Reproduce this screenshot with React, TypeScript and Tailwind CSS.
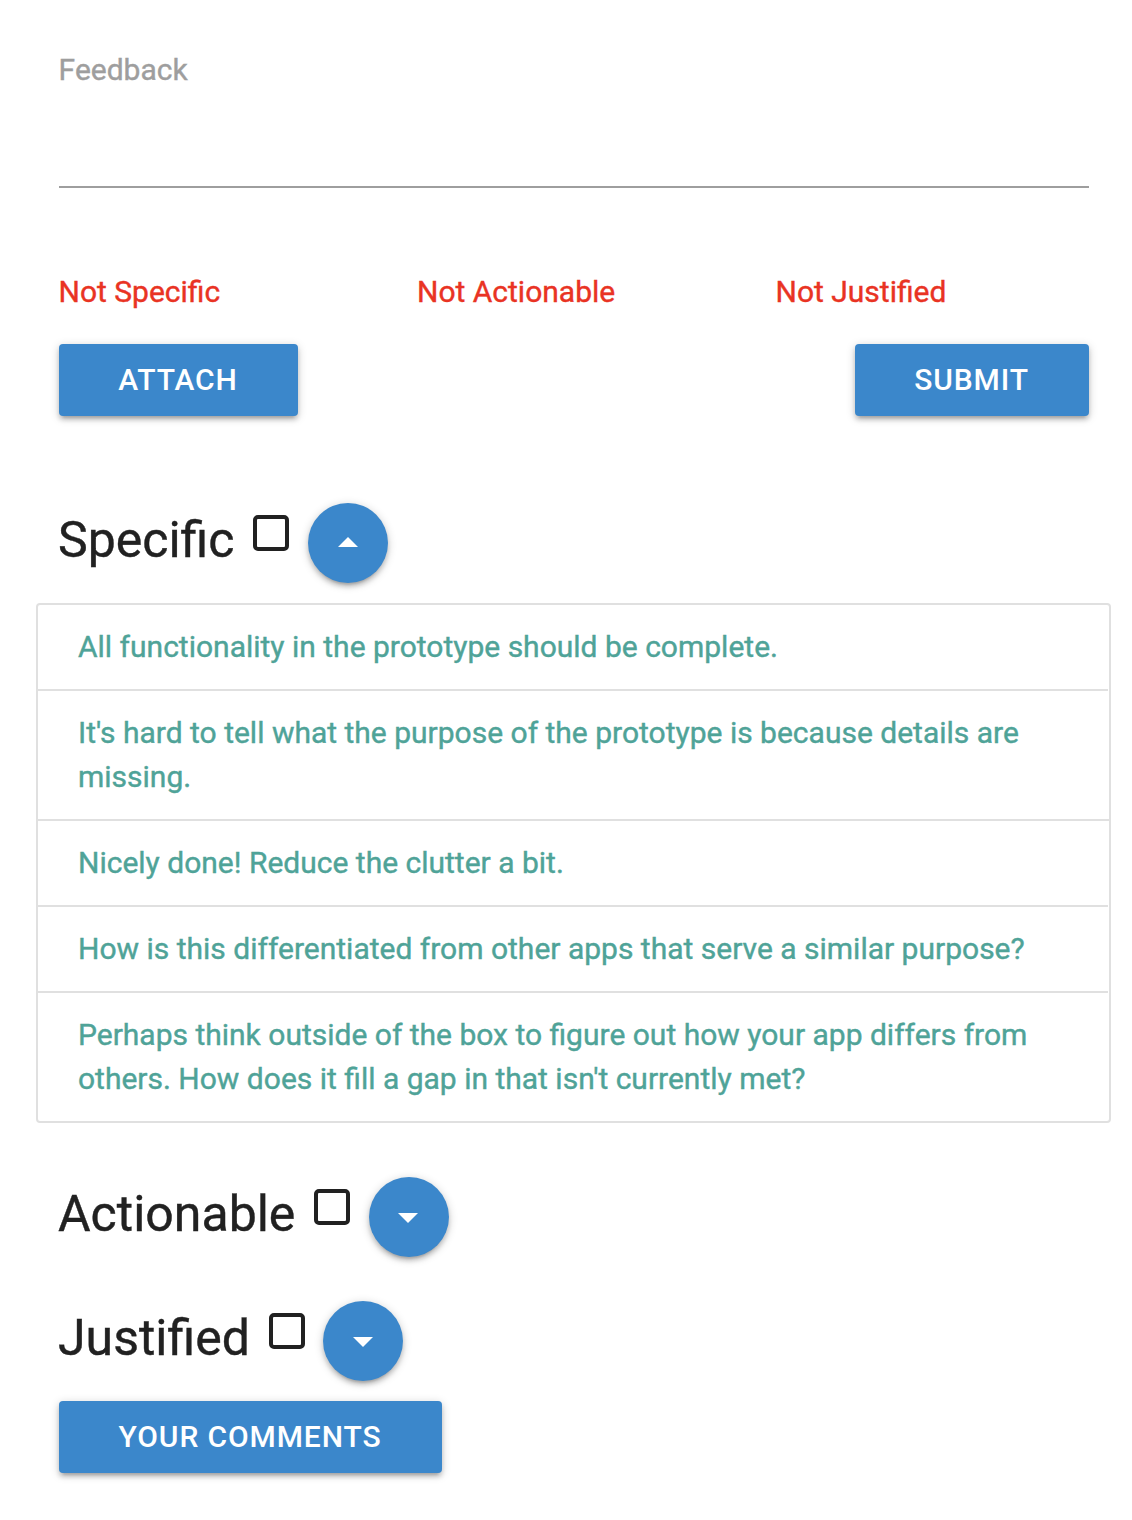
const comments = [
  "All functionality in the prototype should be complete.",
  "It's hard to tell what the purpose of the prototype is because details are missing.",
  "Nicely done! Reduce the clutter a bit.",
  "How is this differentiated from other apps that serve a similar purpose?",
  "Perhaps think outside of the box to figure out how your app differs from others. How does it fill a gap in that isn't currently met?",
];

const raised =
  "bg-[#3b87cb] text-white shadow-[0_4px_4px_rgba(0,0,0,0.14),0_6px_2px_-4px_rgba(0,0,0,0.12),0_2px_10px_rgba(0,0,0,0.2)]";

function Button({ label, width }: { label: string; width: string }) {
  return (
    <button
      className={`${raised} ${width} h-[72px] rounded-[4px] pr-px text-[30px] leading-[72px] font-medium tracking-[0.9px] whitespace-nowrap`}
    >
      {label}
    </button>
  );
}

type CategoryProps = { label: string; labelWidth: string; gap: string; arrowShift: string; open?: boolean };

function Category({ label, labelWidth, gap, arrowShift, open = false }: CategoryProps) {
  return (
    <div className="ml-[58px] flex h-20 items-start">
      <h2
        className={`${labelWidth} mt-px shrink-0 text-[50px] leading-[72px] whitespace-nowrap text-[#212121] [-webkit-text-stroke:0.4px_currentColor]`}
      >
        {label}
      </h2>
      <span className="mt-3 ml-[18px] h-9 w-9 shrink-0 rounded-[5px] border-4 border-[#212121]" />
      <button className={`${raised} ${gap} flex h-20 w-20 shrink-0 items-center justify-center rounded-full`}>
        <svg className={arrowShift} width="20" height="10" viewBox="0 0 20 10" fill="currentColor">
          <path d={open ? "M0 10 10 0l10 10Z" : "M0 0h20L10 10Z"} />
        </svg>
      </button>
    </div>
  );
}

export default function App() {
  return (
    <main className="h-[1520px] w-[1132px] overflow-hidden bg-white font-['Roboto',sans-serif] text-[30px]">
      <div className="mx-[59px] h-[188px] w-[1030px] border-b-2 border-[#9e9e9e] pt-12 leading-[44px] text-[#9e9e9e] [-webkit-text-stroke:0.4px_currentColor]">
        <span className="-ml-[0.4px]">Feedback</span>
      </div>
      <div className="mt-[82px] ml-[58.5px] flex leading-[44px] text-[#e93323] [-webkit-text-stroke:0.4px_currentColor]">
        <span className="w-[358.5px]">Not Specific</span>
        <span className="w-[358.5px]">Not Actionable</span>
        <span>Not Justified</span>
      </div>
      <div className="mt-[30px] ml-[59px] flex w-[1030px] justify-between">
        <Button label="ATTACH" width="w-[239px]" />
        <Button label="SUBMIT" width="w-[234px]" />
      </div>
      <div className="mt-[87px]">
        <Category label="Specific" labelWidth="w-[177px]" gap="ml-[19px]" arrowShift="mb-0.5" open />
      </div>
      <ul className="mt-5 ml-9 w-[1075px] rounded-[4px] border-2 border-[#e0e0e0] leading-[44px] text-[#4fa398] [-webkit-text-stroke:0.4px_currentColor]">
        {comments.map((comment, i) => (
          <li key={comment} className={`${i === 1 ? "" : "mr-px"} border-b-2 border-[#e0e0e0] px-10 py-5 last:border-b-0`}>
            {comment}
          </li>
        ))}
      </ul>
      <div className="mt-[54px]">
        <Category label="Actionable" labelWidth="w-[238px]" gap="ml-[19px]" arrowShift="mt-0.5 mr-0.5" />
      </div>
      <div className="mt-11">
        <Category label="Justified" labelWidth="w-[193px]" gap="ml-[18px]" arrowShift="mt-0.5" />
      </div>
      <div className="mt-5 ml-[59px]">
        <Button label="YOUR COMMENTS" width="w-[383px]" />
      </div>
    </main>
  );
}
